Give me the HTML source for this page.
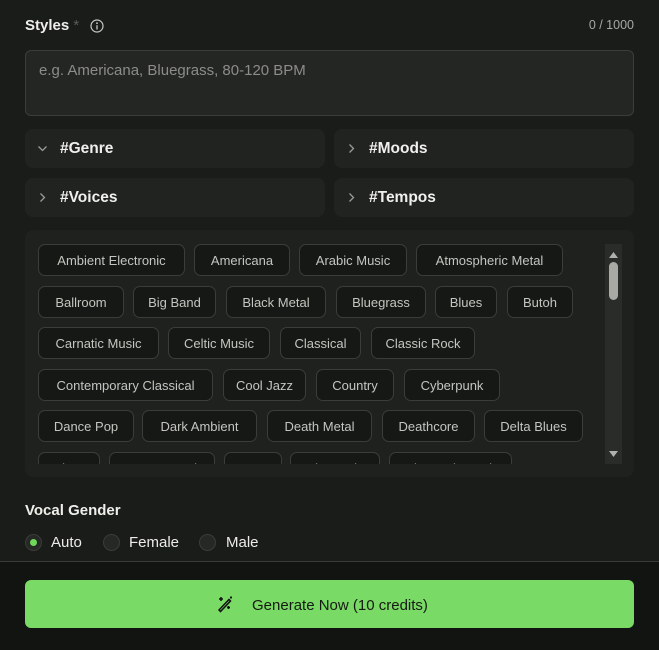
<!DOCTYPE html>
<html><head><meta charset="utf-8">
<style>
*{margin:0;padding:0;box-sizing:border-box}
body{width:659px;height:650px;background:#1a1c19;font-family:"Liberation Sans",sans-serif;position:relative;overflow:hidden;color:#e8e8e4}
.abs{position:absolute}
.lbl{font-weight:bold;font-size:15px;color:#eeeeea}
.acc{position:absolute;background:#202320;border-radius:8px;height:39px;font-weight:bold;font-size:15.5px;color:#f0f0ec;line-height:39px}
.acc svg{position:absolute;left:12px;top:14px}
.acc span{position:absolute;left:35px}
.chip{position:absolute;height:32px;border:1px solid #3b3d39;border-radius:7px;background:#151814;color:#c4c5c0;font-size:13px;line-height:31px;text-align:center;white-space:nowrap;overflow:hidden}
.radio{position:absolute;width:17px;height:17px;border-radius:50%;border:1px solid #3a3c38;background:#262825;top:534px}
.rl{position:absolute;top:534px;font-size:15px;color:#ececE8}
</style></head><body>
<div class="abs lbl" style="left:25px;top:17px">Styles <span style="color:#5a5c58;font-weight:normal">*</span></div>
<svg class="abs" style="left:90px;top:19px" width="14" height="14" viewBox="0 0 14 14"><circle cx="7" cy="7" r="6" fill="none" stroke="#c8c8c4" stroke-width="1.2"/><circle cx="7" cy="4.2" r="0.9" fill="#c8c8c4"/><path d="M7 6.2V10.5" stroke="#c8c8c4" stroke-width="1.3"/></svg>
<div class="abs" style="right:25px;top:18px;font-size:12.5px;color:#a8a9a4">0 / 1000</div>
<div class="abs" style="left:25px;top:50px;width:609px;height:66px;border:1px solid #3b3d39;border-radius:6px;background:#242623"></div>
<div class="abs" style="left:39px;top:62px;font-size:15px;color:#8c8d88">e.g. Americana, Bluegrass, 80-120 BPM</div>

<div class="acc" style="left:25px;top:129px;width:300px"><svg width="11" height="11" viewBox="0 0 11 11"><path d="M1.5 3.5L5.5 7.5L9.5 3.5" fill="none" stroke="#9a9b96" stroke-width="1.3"/></svg><span>#Genre</span></div>
<div class="acc" style="left:334px;top:129px;width:300px"><svg width="11" height="11" viewBox="0 0 11 11"><path d="M3.5 1.5L7.5 5.5L3.5 9.5" fill="none" stroke="#9a9b96" stroke-width="1.3"/></svg><span>#Moods</span></div>
<div class="acc" style="left:25px;top:178px;width:300px"><svg width="11" height="11" viewBox="0 0 11 11"><path d="M3.5 1.5L7.5 5.5L3.5 9.5" fill="none" stroke="#9a9b96" stroke-width="1.3"/></svg><span>#Voices</span></div>
<div class="acc" style="left:334px;top:178px;width:300px"><svg width="11" height="11" viewBox="0 0 11 11"><path d="M3.5 1.5L7.5 5.5L3.5 9.5" fill="none" stroke="#9a9b96" stroke-width="1.3"/></svg><span>#Tempos</span></div>

<div class="abs" style="left:25px;top:230px;width:609px;height:247px;background:#1f211e;border-radius:8px"></div>
<div class="abs" style="left:25px;top:230px;width:580px;height:234px;overflow:hidden">
<div style="position:relative;left:-25px;top:-230px">
<div class="chip" style="left:38px;top:244px;width:147px">Ambient Electronic</div>
<div class="chip" style="left:194px;top:244px;width:96px">Americana</div>
<div class="chip" style="left:299px;top:244px;width:108px">Arabic Music</div>
<div class="chip" style="left:416px;top:244px;width:147px">Atmospheric Metal</div>
<div class="chip" style="left:38px;top:286px;width:86px">Ballroom</div>
<div class="chip" style="left:133px;top:286px;width:83px">Big Band</div>
<div class="chip" style="left:226px;top:286px;width:100px">Black Metal</div>
<div class="chip" style="left:336px;top:286px;width:90px">Bluegrass</div>
<div class="chip" style="left:435px;top:286px;width:62px">Blues</div>
<div class="chip" style="left:507px;top:286px;width:66px">Butoh</div>
<div class="chip" style="left:38px;top:327px;width:121px">Carnatic Music</div>
<div class="chip" style="left:168px;top:327px;width:102px">Celtic Music</div>
<div class="chip" style="left:280px;top:327px;width:81px">Classical</div>
<div class="chip" style="left:371px;top:327px;width:104px">Classic Rock</div>
<div class="chip" style="left:38px;top:369px;width:175px">Contemporary Classical</div>
<div class="chip" style="left:223px;top:369px;width:83px">Cool Jazz</div>
<div class="chip" style="left:316px;top:369px;width:78px">Country</div>
<div class="chip" style="left:404px;top:369px;width:96px">Cyberpunk</div>
<div class="chip" style="left:38px;top:410px;width:96px">Dance Pop</div>
<div class="chip" style="left:142px;top:410px;width:115px">Dark Ambient</div>
<div class="chip" style="left:267px;top:410px;width:105px">Death Metal</div>
<div class="chip" style="left:382px;top:410px;width:93px">Deathcore</div>
<div class="chip" style="left:484px;top:410px;width:99px">Delta Blues</div>
<div class="chip" style="left:38px;top:452px;width:62px">Disco</div>
<div class="chip" style="left:109px;top:452px;width:106px">Doom Metal</div>
<div class="chip" style="left:224px;top:452px;width:58px">EDM</div>
<div class="chip" style="left:290px;top:452px;width:90px">Electronic</div>
<div class="chip" style="left:389px;top:452px;width:123px">Electronic Rock</div>
</div></div>
<div class="abs" style="left:605px;top:244px;width:17px;height:220px;background:#2a2c29"></div>
<svg class="abs" style="left:605px;top:244px" width="17" height="220" viewBox="0 0 17 220"><path d="M4 14L8.5 8L13 14Z" fill="#b0b0ac"/><path d="M4 207L8.5 213L13 207Z" fill="#b0b0ac"/></svg>
<div class="abs" style="left:609px;top:262px;width:9px;height:38px;border-radius:5px;background:#a8a9a5"></div>

<div class="abs lbl" style="left:25px;top:502px;font-weight:bold;font-size:15px">Vocal Gender</div>
<div class="radio" style="left:25px"><div style="position:absolute;left:4px;top:4px;width:7px;height:7px;border-radius:50%;background:#6fd85a"></div></div>
<div class="rl" style="left:51px">Auto</div>
<div class="radio" style="left:103px"></div>
<div class="rl" style="left:129px">Female</div>
<div class="radio" style="left:199px"></div>
<div class="rl" style="left:226px">Male</div>

<div class="abs" style="left:0;top:561px;width:659px;height:89px;background:#111411;border-top:1px solid #3a3c38"></div>
<div class="abs" style="left:25px;top:580px;width:609px;height:48px;background:#79da65;border-radius:6px"></div>
<svg class="abs" style="left:216px;top:595px" width="18" height="18" viewBox="0 0 18 18" fill="none" stroke="#111" stroke-width="1.5"><path d="M3 15L13 4.5L14.5 6L4.5 16.5Z"/><path d="M5 2V6M3 4H7"/><path d="M12.5 11V14M11 12.5H14"/><path d="M15 1.5V3.5M14 2.5H16"/></svg>
<div class="abs" style="left:252px;top:597px;font-size:15px;color:#161a14">Generate Now (10 credits)</div>
</body></html>
